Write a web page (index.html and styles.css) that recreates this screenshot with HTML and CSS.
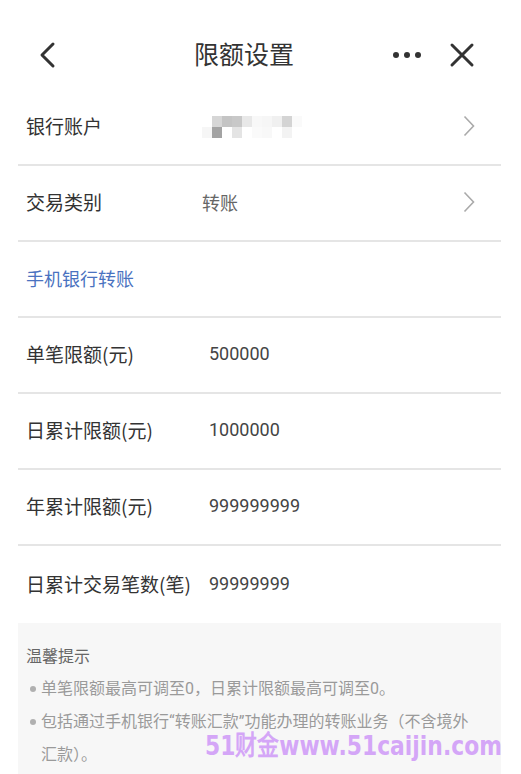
FILE: index.html
```html
<!DOCTYPE html>
<html lang="zh-CN">
<head>
    <meta charset="UTF-8">
    <title>限额设置</title>
    <link rel="stylesheet" href="styles.css">
</head>
<body>
<div class="page">
    <div class="topbar">
        <svg class="icon-back" width="20" height="28" viewBox="0 0 20 28">
            <path d="M15 3 L4 14 L15 25" fill="none" stroke="#333" stroke-width="3" stroke-linecap="round" stroke-linejoin="round"/>
        </svg>
        <div class="title">限额设置</div>
        <svg class="icon-more" width="30" height="8" viewBox="0 0 30 8">
            <circle cx="4" cy="4" r="3" fill="#333"/>
            <circle cx="15" cy="4" r="3" fill="#333"/>
            <circle cx="26" cy="4" r="3" fill="#333"/>
        </svg>
        <svg class="icon-close" width="26" height="26" viewBox="0 0 26 26">
            <path d="M3 3 L23 23 M23 3 L3 23" fill="none" stroke="#333" stroke-width="3" stroke-linecap="round"/>
        </svg>
    </div>

    <div class="list">
        <div class="row">
            <span class="label">银行账户</span>
            <div class="mosaic">
                <div class="mosaic-line">
                    <i style="background:#fff"></i><i style="background:#d6d6d6"></i><i style="background:#c4c4c4"></i><i style="background:#c8c8c8"></i><i style="background:#e8e8e8"></i><i style="background:#f8f8f8"></i><i style="background:#f6f6f6"></i><i style="background:#f0f0f0"></i><i style="background:#d4d4d4"></i><i style="background:#fafafa"></i>
                </div>
                <div class="mosaic-line">
                    <i style="background:#f6f6f6"></i><i style="background:#a3a3a3"></i><i style="background:#fff"></i><i style="background:#e4e4e4"></i><i style="background:#fff"></i><i style="background:#fafafa"></i><i style="background:#f8f8f8"></i><i style="background:#fff"></i><i style="background:#f3f3f3"></i><i style="background:#fff"></i>
                </div>
            </div>
            <svg class="arrow" width="12" height="22" viewBox="0 0 12 22">
                <path d="M1.5 1.5 L10.5 11 L1.5 20.5" fill="none" stroke="#aaa" stroke-width="1.6"/>
            </svg>
        </div>
        <div class="row">
            <span class="label">交易类别</span>
            <span class="value grey">转账</span>
            <svg class="arrow" width="12" height="22" viewBox="0 0 12 22">
                <path d="M1.5 1.5 L10.5 11 L1.5 20.5" fill="none" stroke="#aaa" stroke-width="1.6"/>
            </svg>
        </div>
        <div class="row">
            <span class="section">手机银行转账</span>
        </div>
        <div class="row">
            <span class="label wide">单笔限额(元)</span>
            <span class="value">500000</span>
        </div>
        <div class="row">
            <span class="label wide">日累计限额(元)</span>
            <span class="value">1000000</span>
        </div>
        <div class="row">
            <span class="label wide">年累计限额(元)</span>
            <span class="value">999999999</span>
        </div>
        <div class="row last">
            <span class="label wide">日累计交易笔数(笔)</span>
            <span class="value">99999999</span>
        </div>
    </div>

    <div class="tips">
        <div class="tips-title">温馨提示</div>
        <ul>
            <li>单笔限额最高可调至0，日累计限额最高可调至0。</li>
            <li>包括通过手机银行“转账汇款”功能办理的转账业务（不含境外汇款）。</li>
        </ul>
        <div class="watermark">51财金www.51caijin.com</div>
    </div>
</div>
</body>
</html>
```

FILE: styles.css
```css
body {
    margin: 0;
    background: #ffffff;
    font-family: "Noto Sans CJK SC", "Noto Sans", sans-serif;
    color: #333;
}
.page {
    width: 521px;
    height: 774px;
    overflow: hidden;
}
.topbar {
    height: 90px;
    display: flex;
    align-items: center;
    padding: 0 46px 0 38px;
}
.icon-back {
    margin-top: 20px;
}
.title {
    flex: 1;
    text-align: center;
    font-size: 25px;
    color: #333;
    margin-top: 16px;
    padding-left: 38px;
}
.icon-more {
    margin-top: 20px;
    margin-right: 27px;
}
.icon-close {
    margin-top: 20px;
}
.list {
    margin: 0 20px 0 18px;
}
.row {
    height: 71px;
    display: flex;
    align-items: center;
    padding: 0 26px 3px 8px;
    border-bottom: 2px solid #e5e5e5;
}
.row.last {
    height: 74px;
    border-bottom: none;
}
.label {
    width: 176px;
    font-size: 19px;
    color: #333;
}
.label.wide {
    width: 183px;
}
.value {
    flex: 1;
    font-size: 18px;
    color: #444;
    font-family: Roboto, "Noto Sans CJK SC", sans-serif;
}
.value.grey {
    color: #666;
    font-family: "Noto Sans CJK SC", sans-serif;
}
.section {
    font-size: 18px;
    color: #4a72c0;
}
.arrow {
    margin-left: auto;
}
.mosaic {
    flex: 1;
    display: flex;
    flex-direction: column;
    margin-top: 2px;
}
.mosaic-line {
    display: flex;
}
.mosaic-line i {
    width: 10px;
    height: 11px;
}
.tips {
    margin: 0 20px 0 18px;
    background: #f7f7f7;
    padding: 16px 22px 20px 8px;
    position: relative;
    height: 200px;
}
.tips-title {
    font-size: 16px;
    color: #666;
    line-height: 33px;
}
.tips ul {
    margin: 0;
    padding: 0 0 0 15px;
    list-style: none;
}
.tips li {
    font-family: Roboto, "Noto Sans CJK SC", sans-serif;
    font-size: 16px;
    color: #9a9a9a;
    line-height: 33px;
    position: relative;
}
.tips li::before {
    content: "";
    position: absolute;
    left: -11px;
    top: 14px;
    width: 6px;
    height: 6px;
    border-radius: 50%;
    background: #b0b0b0;
}
.watermark {
    position: absolute;
    left: 187px;
    top: 101px;
    font-family: "DejaVu Sans", sans-serif;
    font-weight: bold;
    font-size: 27px;
    color: #d4a6f7;
    white-space: nowrap;
    transform: scaleX(0.81);
    transform-origin: left center;
}
```
